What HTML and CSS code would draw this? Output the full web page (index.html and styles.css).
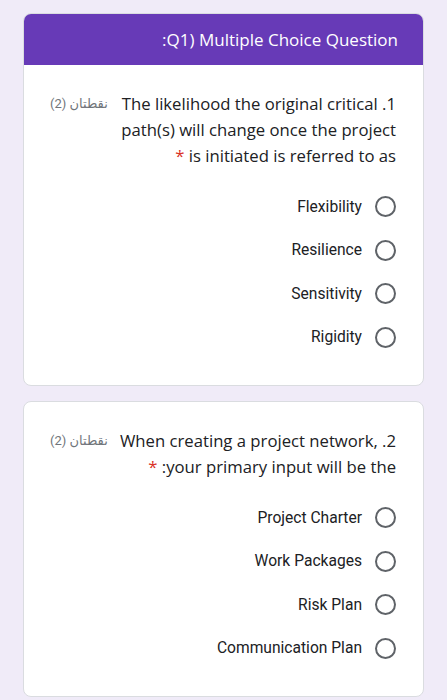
FILE: index.html
```html
<!DOCTYPE html>
<html lang="ar" dir="rtl">
<head>
<meta charset="utf-8">
<link rel="stylesheet" href="styles.css">
</head>
<body>
<div class="page">
  <section class="card">
    <div class="card-header">Q1) Multiple Choice Question:</div>
    <div class="card-body">
      <div class="q-row">
        <div class="q-text required">1. The likelihood the original critical path(s) will change once the project is initiated is referred to as</div>
        <div class="q-points">نقطتان (2)</div>
      </div>
      <div class="options">
        <label class="option"><span class="radio"></span><span class="opt-label">Flexibility</span></label>
        <label class="option"><span class="radio"></span><span class="opt-label">Resilience</span></label>
        <label class="option"><span class="radio"></span><span class="opt-label">Sensitivity</span></label>
        <label class="option"><span class="radio"></span><span class="opt-label">Rigidity</span></label>
      </div>
    </div>
  </section>
  <section class="card">
    <div class="card-body">
      <div class="q-row">
        <div class="q-text required">2. When creating a project network, your primary input will be the:</div>
        <div class="q-points">نقطتان (2)</div>
      </div>
      <div class="options">
        <label class="option"><span class="radio"></span><span class="opt-label">Project Charter</span></label>
        <label class="option"><span class="radio"></span><span class="opt-label">Work Packages</span></label>
        <label class="option"><span class="radio"></span><span class="opt-label">Risk Plan</span></label>
        <label class="option"><span class="radio"></span><span class="opt-label">Communication Plan</span></label>
      </div>
    </div>
  </section>
</div>
</body>
</html>
```

FILE: styles.css
```css
html, body {
  margin: 0;
  padding: 0;
  background: #f0ebf8;
}
body {
  font-family: "Open Sans", "DejaVu Sans", sans-serif;
  color: #202124;
}
.page {
  padding: 13px 23px 0 23px;
  display: flex;
  flex-direction: column;
  gap: 15px;
}
.card {
  background: #ffffff;
  border: 1px solid #dadce0;
  border-radius: 8px;
  overflow: hidden;
}
.card-header {
  background: #673ab7;
  color: #ffffff;
  height: 52px;
  margin: -1px -1px 0 -1px;
  padding: 0 26px;
  display: flex;
  align-items: center;
  font-size: 17px;
  border-radius: 8px 8px 0 0;
}
.card-body {
  padding: 26px 27px 26px 26px;
}
.q-row {
  display: flex;
  align-items: flex-start;
  gap: 9px;
}
.q-text {
  flex: 1;
  font-size: 16.7px;
  line-height: 26px;
}
.q-text.required::after {
  content: " *";
  color: #d93025;
}
.q-points {
  font-size: 13px;
  line-height: 26px;
  color: #70757a;
  white-space: nowrap;
  font-family: "Roboto", "DejaVu Sans", sans-serif;
}
.options {
  margin-top: 16px;
  display: flex;
  flex-direction: column;
}
.option {
  height: 43.5px;
  display: flex;
  align-items: center;
  gap: 13px;
}
.radio {
  width: 17px;
  height: 17px;
  border: 2px solid #5f6368;
  border-radius: 50%;
  flex: none;
}
.opt-label {
  font-family: "Roboto", sans-serif;
  font-size: 15.6px;
  color: #202124;
}
```
